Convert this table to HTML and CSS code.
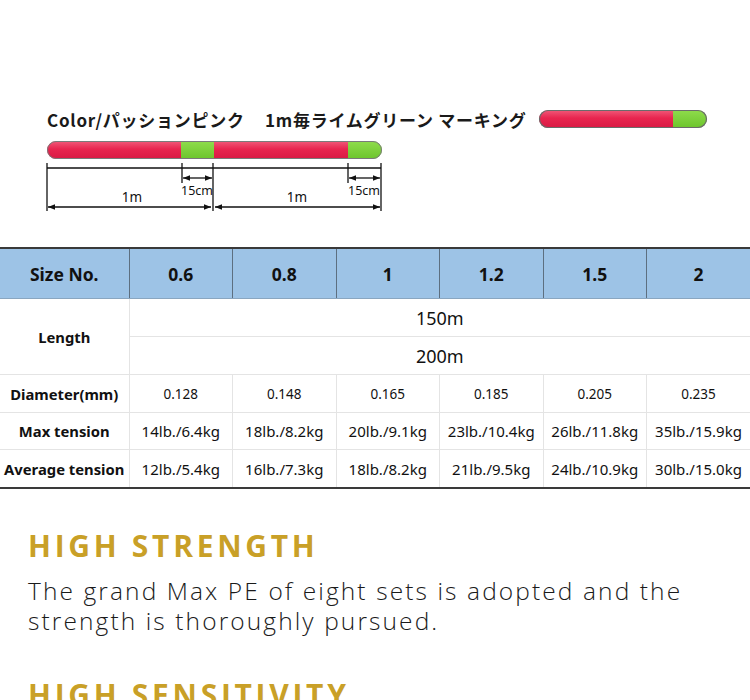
FILE: index.html
```html
<!DOCTYPE html>
<html lang="ja">
<head>
<meta charset="utf-8">
<link rel="stylesheet" href="styles.css">
</head>
<body>
<div class="page">
  <section class="diagram">
    <svg class="diagram-svg" width="750" height="248" viewBox="0 0 750 248" xmlns="http://www.w3.org/2000/svg">
      <defs>
        <linearGradient id="pink" x1="0" y1="0" x2="0" y2="1">
          <stop offset="0" stop-color="#f05a7a"/>
          <stop offset="0.45" stop-color="#e8254f"/>
          <stop offset="1" stop-color="#d81a44"/>
        </linearGradient>
        <linearGradient id="green" x1="0" y1="0" x2="0" y2="1">
          <stop offset="0" stop-color="#8fdc4c"/>
          <stop offset="1" stop-color="#6cc52c"/>
        </linearGradient>
        <clipPath id="bigclip"><rect x="47" y="141" width="335" height="18" rx="9"/></clipPath>
        <clipPath id="smallclip"><rect x="539" y="110" width="168" height="18" rx="9"/></clipPath>
        <marker id="ah" viewBox="0 0 10 10" refX="10" refY="5" markerWidth="7" markerHeight="7" orient="auto-start-reverse" markerUnits="userSpaceOnUse">
          <path d="M0 1 L10 5 L0 9 Z" fill="#111"/>
        </marker>
      </defs>
      <text class="title" x="47" y="127">Color/パッションピンク</text>
      <text class="title" x="265" y="127">1m毎ライムグリーン マーキング</text>

      <g clip-path="url(#smallclip)">
        <rect x="539" y="110" width="134" height="18" fill="url(#pink)"/>
        <rect x="673" y="110" width="34" height="18" fill="url(#green)"/>
      </g>
      <rect x="539.5" y="110.5" width="167" height="17" rx="8.5" fill="none" stroke="#6b6b6b" stroke-width="1.2"/>

      <g clip-path="url(#bigclip)">
        <rect x="47" y="141" width="134" height="18" fill="url(#pink)"/>
        <rect x="181" y="141" width="33" height="18" fill="url(#green)"/>
        <rect x="214" y="141" width="134" height="18" fill="url(#pink)"/>
        <rect x="348" y="141" width="34" height="18" fill="url(#green)"/>
      </g>
      <rect x="47.5" y="141.5" width="334" height="17" rx="8.5" fill="none" stroke="#7a7a7a" stroke-width="1"/>

      <g stroke="#111" stroke-width="1.3" fill="none">
        <line x1="47" y1="168" x2="381" y2="168"/>
        <line x1="47" y1="163" x2="47" y2="211"/>
        <line x1="182" y1="163" x2="182" y2="183"/>
        <line x1="213" y1="163" x2="213" y2="211"/>
        <line x1="348" y1="163" x2="348" y2="183"/>
        <line x1="381" y1="163" x2="381" y2="211"/>
        <line x1="183" y1="178" x2="212" y2="178" marker-start="url(#ah)" marker-end="url(#ah)"/>
        <line x1="349" y1="178" x2="380" y2="178" marker-start="url(#ah)" marker-end="url(#ah)"/>
        <line x1="48" y1="207" x2="211" y2="207" marker-start="url(#ah)" marker-end="url(#ah)"/>
        <line x1="215" y1="207" x2="380" y2="207" marker-start="url(#ah)" marker-end="url(#ah)"/>
      </g>
      <text class="dim" x="197" y="195" text-anchor="middle">15cm</text>
      <text class="dim" x="364" y="195" text-anchor="middle">15cm</text>
      <text class="dim dim-lg" x="132" y="202" text-anchor="middle">1m</text>
      <text class="dim dim-lg" x="297" y="202" text-anchor="middle">1m</text>
    </svg>
  </section>

  <table class="spec">
    <colgroup>
      <col class="c-label">
      <col class="c-val"><col class="c-val"><col class="c-val">
      <col class="c-val"><col class="c-val"><col class="c-val">
    </colgroup>
    <thead>
      <tr class="head">
        <th>Size No.</th><th>0.6</th><th>0.8</th><th>1</th><th>1.2</th><th>1.5</th><th>2</th>
      </tr>
    </thead>
    <tbody>
      <tr class="len">
        <th rowspan="2">Length</th>
        <td colspan="6" class="big">150m</td>
      </tr>
      <tr class="len">
        <td colspan="6" class="big">200m</td>
      </tr>
      <tr class="r1">
        <th>Diameter(mm)</th>
        <td class="sm">0.128</td><td class="sm">0.148</td><td class="sm">0.165</td><td class="sm">0.185</td><td class="sm">0.205</td><td class="sm">0.235</td>
      </tr>
      <tr class="r2">
        <th>Max tension</th>
        <td>14lb./6.4kg</td><td>18lb./8.2kg</td><td>20lb./9.1kg</td><td>23lb./10.4kg</td><td>26lb./11.8kg</td><td>35lb./15.9kg</td>
      </tr>
      <tr class="r3">
        <th>Average tension</th>
        <td>12lb./5.4kg</td><td>16lb./7.3kg</td><td>18lb./8.2kg</td><td>21lb./9.5kg</td><td>24lb./10.9kg</td><td>30lb./15.0kg</td>
      </tr>
    </tbody>
  </table>

  <section class="feature">
    <h2 class="feature-title">HIGH STRENGTH</h2>
    <p class="feature-text">The grand Max PE of eight sets is adopted and the strength is thoroughly pursued.</p>
  </section>
  <section class="feature">
    <h2 class="feature-title">HIGH SENSITIVITY</h2>
  </section>
</div>
</body>
</html>
```

FILE: styles.css
```css
html, body {
  margin: 0;
  padding: 0;
  background: #ffffff;
}
.page {
  width: 750px;
  overflow: hidden;
}
.diagram {
  height: 247px;
}
.diagram-svg {
  display: block;
}
.title {
  font-family: "Noto Sans CJK JP", "Noto Sans", sans-serif;
  font-weight: 700;
  font-size: 17px;
  letter-spacing: 0.75px;
  fill: #1a1a1a;
}
.dim {
  font-family: "Noto Sans", "DejaVu Sans", sans-serif;
  font-size: 12.5px;
  fill: #111;
}
.dim-lg {
  font-size: 13.5px;
}

.spec {
  width: 750px;
  table-layout: fixed;
  border-collapse: collapse;
  font-family: "Noto Sans", "Open Sans", sans-serif;
  color: #111;
  border-top: 2px solid #3a3a3a;
  border-bottom: 2px solid #3a3a3a;
}
.c-label { width: 129px; }
.c-val { width: 103.5px; }
.spec th, .spec td {
  padding: 0;
  text-align: center;
  vertical-align: middle;
  border: 1px solid #e4e4e4;
  white-space: nowrap;
}
.spec tr > :first-child { border-left: none; }
.spec tr > :last-child { border-right: none; }
.spec tbody th {
  font-weight: 700;
  font-size: 14.8px;
}
.spec td {
  font-size: 15px;
  font-weight: 400;
}
.head th {
  background: #9dc3e6;
  height: 49px;
  font-size: 17.5px;
  font-weight: 700;
  border-color: #5d6f80;
  border-top: none;
  border-bottom: 1px solid #8aa6c0;
}
.len td {
  height: 37px;
}
.big {
  font-size: 18px !important;
}
.sm {
  font-size: 13.5px !important;
}
.r1 td, .r1 th { height: 37px; }
.r2 td, .r2 th { height: 36px; }
.r3 td, .r3 th { height: 37px; }

.feature {
  padding: 0 28px;
}
.feature-title {
  margin: 40px 0 0;
  font-family: "Open Sans", "Noto Sans", sans-serif;
  font-weight: 700;
  font-size: 30px;
  line-height: 34px;
  letter-spacing: 3.7px;
  color: #c9a027;
}
.feature-text {
  margin: 13px 0 0;
  font-family: "Open Sans", "Noto Sans", sans-serif;
  font-weight: 300;
  font-size: 24.5px;
  line-height: 30px;
  letter-spacing: 2.1px;
  color: #1a1a1a;
}
.feature + .feature .feature-title {
  margin-top: 42px;
}
```
